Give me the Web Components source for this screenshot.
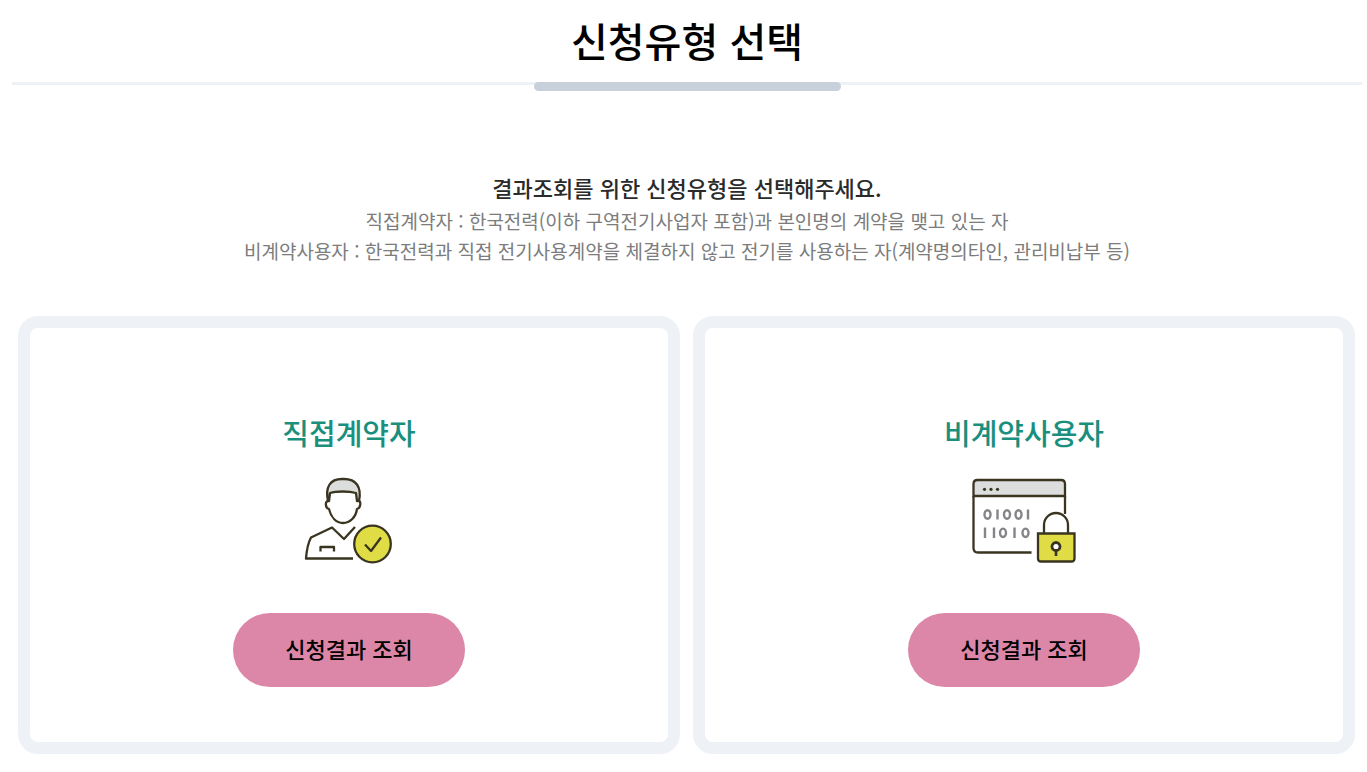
<!DOCTYPE html>
<html lang="ko">
<head>
<meta charset="utf-8">
<meta name="viewport" content="width=device-width, initial-scale=1">
<title>신청유형 선택</title>
<style>
body { margin: 0; background: #fff; color: #000; font-family: "Noto Sans CJK KR", sans-serif; }
</style>
</head>
<body>
<apply-page></apply-page>

<template id="page-title-template">
<style>
:host { display: block; border-bottom: 3px solid #eef1f5; height: 82px; }
h1 { margin: 0; padding: 10px 0 2px; height: 70px; text-align: center; font-size: 40px; line-height: 60px; font-weight: 500; }
.bar { position: relative; width: 307px; height: 9px; margin: 0 auto; border-radius: 5px; background: #c8d0dc; }
</style>
<h1><slot></slot></h1>
<div class="bar"></div>
</template>

<template id="type-guide-template">
<style>
:host { display: block; text-align: center; }
p { margin: 0; font-size: 19px; line-height: 30px; color: #7c7c7c; }
.lead { font-size: 22px; line-height: 30px; padding-bottom: 4px; color: #2a2a2a; font-weight: 500; }
</style>
<p class="lead"><slot name="lead"></slot></p>
<p><slot name="direct"></slot></p>
<p><slot name="indirect"></slot></p>
</template>

<template id="type-card-template">
<style>
:host { display: flex; flex-direction: column; align-items: center; box-sizing: border-box; border: 12px solid #eef2f7; border-radius: 20px; padding: 82px 16px 55px; }
h2 { margin: 0; font-size: 29px; line-height: 44px; font-weight: 500; color: #1a8f7e; }
.icon { height: 100px; margin: 16px 0 43px; display: flex; align-items: center; justify-content: center; }
button { width: 232px; height: 74px; padding: 0 0 4px; border: 0; border-radius: 37px; background: #dd87a8; color: #000; font-family: inherit; font-size: 22px; line-height: 32px; font-weight: 500; cursor: pointer; }
</style>
<h2 id="name"><slot name="name"></slot></h2>
<div class="icon"><slot name="icon"></slot></div>
<button type="button" aria-describedby="name">신청결과 조회</button>
</template>

<template id="person-icon-template">
<style>:host, svg { display: block; }</style>
<svg width="108" height="100" viewBox="0 0 108 100" fill="none" stroke="#3a3521" stroke-width="2.3" stroke-linejoin="round" aria-hidden="true">
<path d="M33 31C30 17 35 9 47 9h2c12 0 18 8 15 22l-2 0 -1-8c-7-2-20-2-26 0l-1 8z" fill="#dcdddd"/>
<path d="M33 31c-3 0-3 7 1 8 2 8 7 14 14 14s13-6 14-14c4-1 4-8 2-8"/>
<path d="M59.500 57.500L49 69 37 57.500 16 67.500C12.500 74 11.500 82 11 88.500h47M49 69l11-12"/>
<path d="M25.500 81.500v-4.500h13.500v4.500"/>
<circle cx="77.500" cy="74" r="18.300" fill="#dfdc45"/>
<path d="M70 74.500l6 6.500 10-13.500"/>
</svg>
</template>

<template id="secure-icon-template">
<style>:host, svg { display: block; }</style>
<svg width="128" height="100" viewBox="0 0 128 100" fill="none" stroke="#3a3521" stroke-width="2.3" aria-hidden="true">
<path d="M13.500 26V14q0-4 4-4H101q4 0 4 4v12z" fill="#dcdddd"/>
<path d="M71.500 82.500H18q-4.500 0-4.500-4.500V26M105 26v18"/>
<g fill="#3a3521" stroke="none"><circle cx="24.500" cy="19.300" r="1.600"/><circle cx="31" cy="19.300" r="1.600"/><circle cx="37.500" cy="19.300" r="1.600"/></g>
<g stroke="#858589" stroke-width="2.400">
<ellipse cx="27.500" cy="44.500" rx="3" ry="4.200"/><ellipse cx="47" cy="44.500" rx="3" ry="4.200"/><ellipse cx="58.500" cy="44.500" rx="3" ry="4.200"/>
<ellipse cx="43" cy="62.800" rx="3" ry="4.200"/><ellipse cx="65.500" cy="62.800" rx="3" ry="4.200"/>
<path d="M37.500 39.500v10M68 39.500v10M25 57.500v10.500M34 57.500v10.500M54.500 57.500v10.500"/>
</g>
<path d="M84 64V55a12 12 0 0 1 24 0v9" fill="#fff"/>
<path d="M78 63.500h36.500v25q0 3-3 3H81q-3 0-3-3z" fill="#dfdc45"/>
<circle cx="96" cy="76.500" r="4" fill="#fff" stroke-width="2.800"/>
<path d="M96 80v6" stroke-width="2.600"/>
</svg>
</template>

<template id="apply-page-template">
<style>
:host { display: block; }
page-title { margin: 0 5px 0 12px; }
type-guide { margin: 87px 5px 0 12px; }
.cards { display: grid; grid-template-columns: 1fr 1fr; gap: 13px; margin: 50px 12px 18px 18px; }
</style>
<header><page-title>신청유형 선택</page-title></header>
<main>
<type-guide>
<span slot="lead">결과조회를 위한 신청유형을 선택해주세요.</span>
<span slot="direct">직접계약자 : 한국전력(이하 구역전기사업자 포함)과 본인명의 계약을 맺고 있는 자</span>
<span slot="indirect">비계약사용자 : 한국전력과 직접 전기사용계약을 체결하지 않고 전기를 사용하는 자(계약명의타인, 관리비납부 등)</span>
</type-guide>
<section class="cards">
<type-card><span slot="name">직접계약자</span><person-icon slot="icon"></person-icon></type-card>
<type-card><span slot="name">비계약사용자</span><secure-icon slot="icon"></secure-icon></type-card>
</section>
</main>
</template>

<script>
class TemplateElement extends HTMLElement {
  constructor() {
    super();
    const template = document.getElementById(this.localName + '-template');
    this.attachShadow({ mode: 'open' }).append(template.content.cloneNode(true));
  }
}
for (const name of ['page-title', 'type-guide', 'person-icon', 'secure-icon', 'type-card', 'apply-page']) {
  customElements.define(name, class extends TemplateElement {});
}
</script>
</body>
</html>
